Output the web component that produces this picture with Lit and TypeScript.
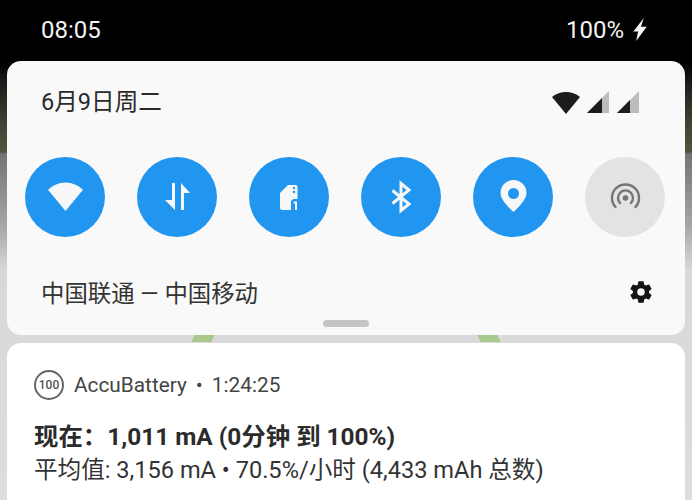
import { LitElement, html, css, svg } from "lit";
import { customElement } from "lit/decorators.js";

const wifiIcon = svg`<path d="M20.500 34 3 12.800C7.800 8.400 13.800 5.500 20.500 5.500S33.200 8.400 38 12.800Z" fill="currentColor"/>`;
const dataIcon = svg`<path d="M15 6h3v27L8 23h7ZM24 33V6l9 10h-6v17Z" fill="currentColor"/>`;
const simIcon = svg`<path fill="currentColor" d="M19 8h7.500a2 2 0 0 1 2 2v12H25a3.500 3.500 0 0 0-3 3.500V33h-9a2 2 0 0 1-2-2V16Z"/>
  <circle cx="25" cy="11" r="1.200" fill="#2196f0"/><circle cx="25" cy="15" r="1.200" fill="#2196f0"/>
  <path d="M24.500 24.500H28V33h-2v-6.500h-1.500Z" fill="currentColor"/>`;
const btIcon = svg`<path d="M11.500 13.500 28 27l-8 6.500v-27l8 6.500-16.500 13.500" fill="none" stroke="currentColor" stroke-width="3"/>`;
const pinIcon = svg`<path fill-rule="evenodd" fill="currentColor" d="M20.500 35S7.500 24 7.500 16a13 13 0 0 1 26 0C33.500 24 20.500 35 20.500 35Zm0-13a5.500 5.500 0 1 0 0-11 5.500 5.500 0 0 0 0 11Z"/>`;
const hotspotIcon = svg`<g fill="none" stroke="currentColor" stroke-width="2.400" stroke-linecap="round">
    <path d="M10.500 30a13.500 13.500 0 1 1 20 0"/><path d="M15 26a7.500 7.500 0 1 1 11 0"/></g>
  <circle cx="20.500" cy="21" r="2.800" fill="currentColor"/>`;

const tiles = [
  { icon: wifiIcon, off: false },
  { icon: dataIcon, off: false },
  { icon: simIcon, off: false },
  { icon: btIcon, off: false },
  { icon: pinIcon, off: false },
  { icon: hotspotIcon, off: true },
];

@customElement("app-root")
export class AppRoot extends LitElement {
  static styles = css`
    :host {
      display: block;
      width: 692px;
      height: 500px;
      overflow: hidden;
      font-family: Roboto, "Noto Sans CJK SC", sans-serif;
      background: linear-gradient(
        #000 0,
        #000 62px,
        #1e1f1b 85px,
        #454838 130px,
        #52543f 152px,
        #747474 154px,
        #a5a5a5 225px,
        #d8d8d8 270px,
        #dcdddc 500px
      );
    }

    .status {
      height: 61px;
      box-sizing: border-box;
      display: flex;
      align-items: center;
      justify-content: space-between;
      padding: 0 44px 2px 41px;
      color: #f4f4f4;
      font-size: 24px;
    }
    .status__right {
      display: flex;
      align-items: center;
      gap: 8px;
    }
    .status svg {
      display: block;
    }

    .panel,
    .card {
      margin: 0 7px;
      border-radius: 14px;
    }

    .panel {
      height: 274px;
      background: #f9f9f9;
      display: flex;
      flex-direction: column;
    }
    .panel__top {
      height: 81px;
      display: flex;
      align-items: center;
      justify-content: space-between;
      padding: 0 44px 4px 34px;
      box-sizing: border-box;
      font-size: 23.6px;
      color: #2a2a2a;
    }
    .signals {
      display: flex;
      align-items: center;
      margin-top: 4px;
    }
    .signals svg {
      display: block;
    }

    .tiles {
      display: flex;
      gap: 32px;
      margin-top: 15px;
      padding-left: 18px;
    }
    .tile {
      width: 80px;
      height: 80px;
      border-radius: 50%;
      background: #2196f0;
      color: #f7f7f7;
      display: flex;
      align-items: center;
      justify-content: center;
      flex: none;
    }
    .tile--off {
      background: #e3e3e3;
      color: #757575;
    }

    .panel__bottom {
      display: flex;
      align-items: center;
      justify-content: space-between;
      margin-top: 35px;
      padding: 0 31px 0 34px;
      height: 40px;
      font-size: 23.4px;
      color: #333;
    }

    .handle {
      width: 46px;
      height: 7px;
      border-radius: 4px;
      background: #c4c4c4;
      margin: 8px auto 0;
    }

    .gap {
      position: relative;
      height: 8px;
    }
    .gap span {
      position: absolute;
      top: 0;
      width: 20px;
      height: 7px;
      background: #a9c98c;
    }
    .gap .left {
      left: 193px;
      transform: skewX(-28deg);
    }
    .gap .right {
      left: 479px;
      transform: skewX(28deg);
    }

    .card {
      height: 170px;
      background: #fff;
      padding: 27px 0 0 27px;
    }
    .card__head {
      display: flex;
      align-items: center;
      gap: 10px;
      font-size: 20.8px;
      color: #444;
    }
    .card__sep {
      margin: 0 9px;
    }
    .badge {
      width: 30px;
      height: 30px;
      box-sizing: border-box;
      border: 2px solid #666;
      border-radius: 50%;
      display: flex;
      align-items: center;
      justify-content: center;
      font-size: 12px;
      font-weight: 500;
      color: #555;
      flex: none;
    }
    .card__body {
      margin-top: 20px;
      line-height: 33px;
      font-size: 23.6px;
      color: #333;
    }
    .card__now {
      font-size: 24.4px;
      line-height: 34px;
      font-weight: 700;
      color: #2b2b2b;
    }
  `;

  render() {
    return html`
      <div class="status">
        <span>08:05</span>
        <span class="status__right">
          100%
          <svg width="16" height="23" viewBox="0 0 16 24">
            <path d="M12 0 1 14h5L4 24 15 9H9Z" fill="#f4f4f4" />
          </svg>
        </span>
      </div>

      <div class="panel">
        <div class="panel__top">
          <span>6月9日周二</span>
          <span class="signals">
            <svg width="90" height="26" viewBox="0 0 90 26">
              <path d="M15 25 1 8C5 4.500 10 3 15 3s10 1.500 14 5Z" fill="#1c1c1c" />
              <path d="M36 24 58 2v22Z" fill="#bcbcbc" />
              <path d="M36 24 51 9v15Z" fill="#1c1c1c" />
              <path d="M66 24 88 2v22Z" fill="#bcbcbc" />
              <path d="M66 24 79 11v13Z" fill="#1c1c1c" />
            </svg>
          </span>
        </div>

        <div class="tiles">
          ${tiles.map(
            (t) => html`<div class="tile ${t.off ? "tile--off" : ""}">
              <svg width="40" height="40" viewBox="0 0 40 40">${t.icon}</svg>
            </div>`,
          )}
        </div>

        <div class="panel__bottom">
          <span>中国联通 — 中国移动</span>
          <svg width="26" height="26" viewBox="0 0 24 24">
            <path
              fill="#151515"
              d="M19.400 13c.04-.32.100-.66.100-1s-.06-.68-.1-1l2.100-1.650c.2-.15.25-.42.12-.64l-2-3.460c-.12-.22-.39-.3-.61-.22l-2.490 1c-.52-.4-1.080-.73-1.690-.98l-.38-2.650A.49.49 0 0 0 14 2h-4c-.25 0-.46.180-.49.420l-.38 2.650c-.61.250-1.170.590-1.690.98l-2.490-1c-.23-.09-.49 0-.61.220l-2 3.460c-.13.220-.07.490.12.640L4.570 11c-.04.320-.07.650-.07 1s.03.680.07 1l-2.110 1.650c-.19.150-.24.420-.12.640l2 3.460c.12.220.39.300.61.220l2.490-1c.52.400 1.080.730 1.690.980l.38 2.650c.03.240.24.420.49.420h4c.25 0 .46-.180.49-.420l.38-2.650c.61-.250 1.170-.590 1.690-.980l2.490 1c.23.090.49 0 .61-.220l2-3.460c.12-.22.07-.49-.12-.64ZM12 15.500a3.500 3.500 0 1 1 0-7 3.500 3.500 0 0 1 0 7Z"
            />
          </svg>
        </div>

        <div class="handle"></div>
      </div>

      <div class="gap"><span class="left"></span><span class="right"></span></div>

      <div class="card">
        <div class="card__head">
          <span class="badge">100</span>
          <span>AccuBattery<span class="card__sep">•</span>1:24:25</span>
        </div>
        <div class="card__body">
          <div class="card__now">现在：1,011 mA (0分钟 到 100%)</div>
          <div>平均值: 3,156 mA • 70.5%/小时 (4,433 mAh 总数)</div>
        </div>
      </div>
    `;
  }
}
